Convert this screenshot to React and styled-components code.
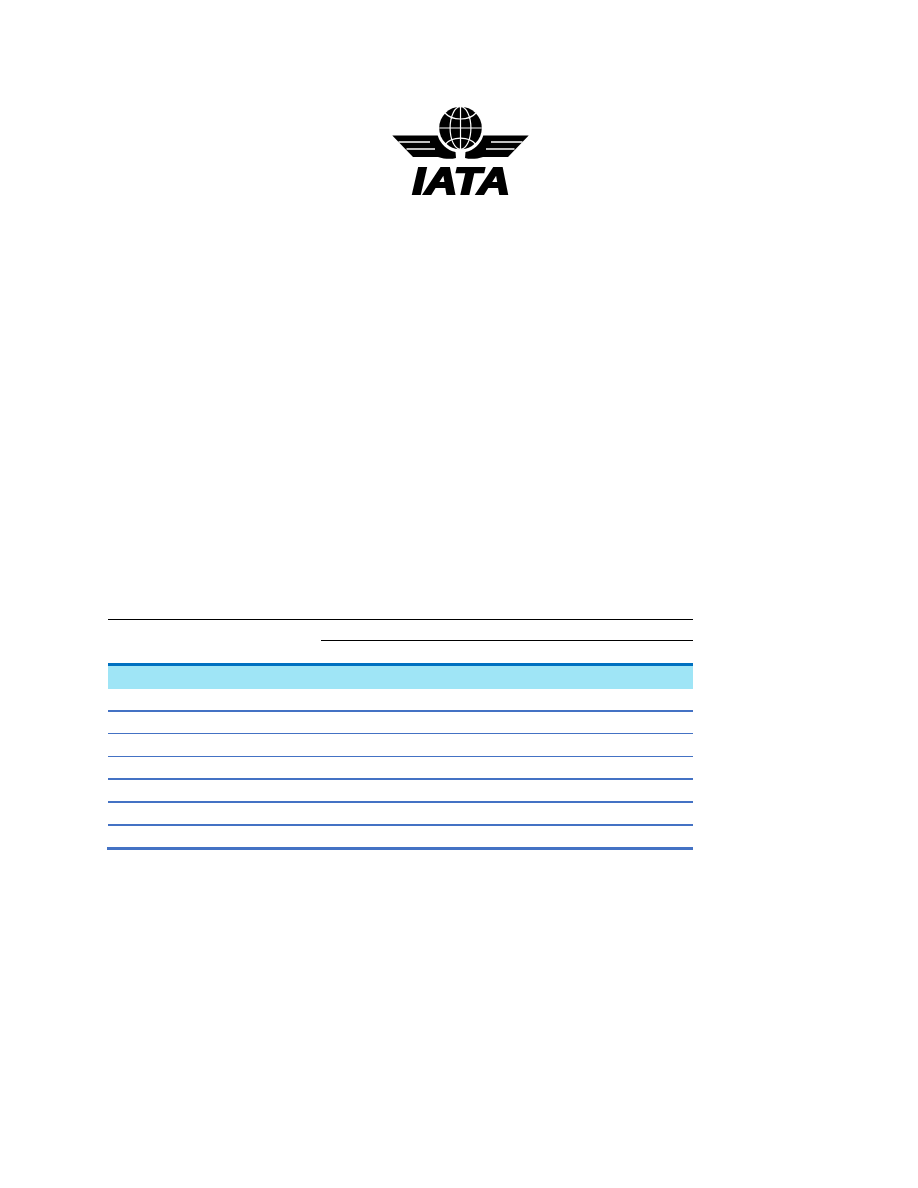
import React from 'react'
import styled, { createGlobalStyle } from 'styled-components'

const GlobalStyle = createGlobalStyle`
    html, body {
        margin: 0;
        padding: 0;
        background: #ffffff;
    }
`

const Page = styled.div`
    width: 918px;
    height: 1188px;
    padding-top: 100px;
    box-sizing: border-box;
    overflow: hidden;
`

const LogoRow = styled.div`
    display: flex;
    justify-content: center;
    height: 110px;
`

const LogoSvg = styled.svg`
    display: block;
    width: 140px;
    height: 110px;
`

const LogoText = styled.text`
    font-family: "Liberation Sans", Arial, sans-serif;
    font-size: 36.5px;
    font-weight: 700;
    font-style: italic;
    fill: #000000;
    stroke: #000000;
    stroke-width: 2.1px;
    filter: grayscale(1);
`

const Table = styled.div`
    margin: 409px 225px 0 108px;
    border-top: 1px solid #000000;
`

const SpanHeader = styled.div`
    height: 20px;
    margin-left: 213px;
    border-bottom: 1px solid #000000;
`

const HeaderBand = styled.div`
    height: 23px;
    margin-top: 22px;
    background: #9fe5f6;
    border-top: 3px solid #0070c0;
`

const Row = styled.div`
    height: ${(p) => p.$height}px;
    box-sizing: border-box;
    margin-left: ${(p) => (p.$last ? -1 : 0)}px;
    border-bottom: ${(p) => p.$rule}px solid #4472c4;
`

const rows = [
    { height: 23, rule: 2 },
    { height: 22, rule: 1 },
    { height: 23, rule: 1 },
    { height: 23, rule: 2 },
    { height: 23, rule: 2 },
    { height: 23, rule: 2 },
    { height: 24, rule: 3, last: true }
]

const Wing = () => (
    <g>
        <path
            fill="#000"
            d="M392.3 135.5 L437.7 135.5 A24 24 0 0 0 455.5 152 L456 158 C451 159.5 444 159 438 157 L413 157 Z"
        />
        <path
            fill="none"
            stroke="#fff"
            strokeWidth="1.3"
            d="M398.5 142 L430 142 M406.5 149 L435 149"
        />
    </g>
)

const Logo = () => (
    <LogoSvg viewBox="389 100 140 110">
        <circle cx="460.5" cy="128" r="21.3" fill="#000" />
        <g fill="none" stroke="#fff" strokeWidth="1.2">
            <ellipse cx="460.5" cy="128" rx="10.4" ry="21.3" />
            <path d="M460.5 106.7 L460.5 149.3" />
            <path d="M439.2 128 L481.8 128" />
            <path d="M445 113 C452 121 469 121 476 113" />
            <path d="M445 144.5 C452 136 469 136 476 144.5" />
        </g>
        <Wing />
        <g transform="translate(921 0) scale(-1 1)">
            <Wing />
        </g>
        <LogoText x="412.5" y="194" textLength="97.5" lengthAdjust="spacingAndGlyphs">
            IATA
        </LogoText>
    </LogoSvg>
)

const App = () => {
    return (
        <Page>
            <GlobalStyle />
            <LogoRow>
                <Logo />
            </LogoRow>
            <Table>
                <SpanHeader />
                <HeaderBand />
                {rows.map((row, i) => (
                    <Row key={i} $height={row.height} $rule={row.rule} $last={row.last} />
                ))}
            </Table>
        </Page>
    )
}

export default App
